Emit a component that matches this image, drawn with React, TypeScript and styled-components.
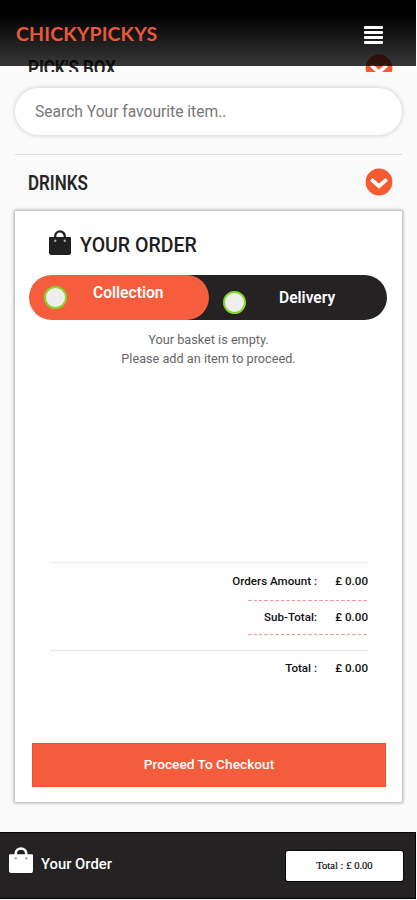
import React from 'react';
import styled, { createGlobalStyle } from 'styled-components';

const ORANGE = '#f55d3c';
const DARK = '#242223';

const GlobalStyle = createGlobalStyle`
  * { box-sizing: border-box; }
  body { margin: 0; background: #fafafa; font-family: Roboto, "Liberation Sans", sans-serif; }
`;

const Page = styled.div`
  width: 417px;
  height: 900px;
  overflow: hidden;
  display: flex;
  flex-direction: column;
  background: #fafafa;
`;

const Header = styled.header`
  position: relative;
  z-index: 1;
  flex: none;
  width: 416px;
  height: 66px;
  margin-bottom: -12px;
  padding: 2px 33px 0 16px;
  display: flex;
  align-items: center;
  justify-content: space-between;
  background: linear-gradient(#000 0%, #000 22%, rgba(0, 0, 0, 0.78) 100%);
`;

const Brand = styled.h1`
  margin: 0;
  font: 700 19.5px/24px Lato, sans-serif;
  letter-spacing: 0.14px;
  color: #e9583b;
`;

const MenuButton = styled.div`
  width: 19px;
  height: 19px;
  margin-top: 2px;
  display: flex;
  flex-direction: column;
  justify-content: space-between;
`;

const MenuBar = styled.span`
  height: 3.6px;
  border-radius: 1px;
  background: #fff;
`;

const ScrolledCategory = styled.section`
  flex: none;
  height: 18px;
  padding: 0 24px 0 28px;
  overflow: hidden;
  display: flex;
  justify-content: space-between;
  align-items: flex-start;
  background: #fdfdfd;
`;

const CategoryTitle = styled.h2<{ $width: number; $top: number }>`
  margin: ${(p) => p.$top}px 0 0;
  width: ${(p) => p.$width}px;
  font-size: 19.5px;
  line-height: 28px;
  font-weight: 600;
  white-space: nowrap;
  color: #252525;
  transform: scaleX(0.87);
  transform-origin: left;
`;

const SearchBox = styled.div`
  flex: none;
  height: 47px;
  margin: 16px 15px 0;
  padding: 0 20px;
  display: flex;
  align-items: center;
  border-radius: 24px;
  background: #fff;
  box-shadow: 0 0 5px rgba(0, 0, 0, 0.2);
  font-size: 15.6px;
  color: #777;
`;

const CategoryRow = styled.section`
  flex: none;
  height: 56px;
  margin: 19px 15px 0;
  padding: 0 9px 0 13px;
  display: flex;
  align-items: center;
  justify-content: space-between;
  border-top: 1px solid #ddd;
  & > svg { margin-top: -2px; }
`;

const Card = styled.main`
  flex: none;
  height: 591px;
  margin: 1px 15px 0;
  padding: 0 16px 16px;
  display: flex;
  flex-direction: column;
  background: #fff;
  box-shadow: 0 0 3px 1px rgba(0, 0, 0, 0.32);
`;

const OrderHeading = styled.div`
  height: 65px;
  padding: 4px 0 0 18px;
  display: flex;
  align-items: center;
  gap: 9px;
  color: #202020;
  & > svg { margin-top: -6px; }
`;

const OrderTitle = styled.h2`
  margin: 0;
  font-size: 19.5px;
  line-height: 24px;
  font-weight: 500;
`;

const Toggle = styled.div`
  flex: none;
  height: 45px;
  margin: -1px -1px 0 -2px;
  display: flex;
  border-radius: 23px;
  background: linear-gradient(90deg, transparent 40px, ${DARK} 40px);
`;

const Option = styled.div<{ $active?: boolean }>`
  width: ${(p) => (p.$active ? 180 : 178)}px;
  height: 45px;
  padding-left: ${(p) => (p.$active ? 15 : 14)}px;
  padding-top: ${(p) => (p.$active ? 0 : 10)}px;
  display: flex;
  align-items: center;
  border-radius: 23px;
  background: ${(p) => (p.$active ? ORANGE : 'transparent')};
  color: #fff;
`;

const Radio = styled.span`
  flex: none;
  width: 23px;
  height: 23px;
  border-radius: 50%;
  border: 2px solid #84d82b;
  background: #eee;
`;

const OptionLabel = styled.span<{ $gap: number }>`
  margin-left: ${(p) => p.$gap}px;
  margin-top: -10px;
  font-size: 15.6px;
  font-weight: 600;
`;

const EmptyMessage = styled.p`
  margin: 11px 0 0;
  font-size: 12.7px;
  line-height: 18.5px;
  text-align: center;
  color: #666;
`;

const Totals = styled.section`
  height: 125px;
  margin: auto 18px 56px 19px;
  display: flex;
  flex-direction: column;
  border-top: 1px solid #ececec;
`;

const TotalRow = styled.div<{ $height: number }>`
  height: ${(p) => p.$height}px;
  padding-bottom: 2px;
  display: grid;
  grid-template-columns: 1fr 33px;
  column-gap: 18px;
  align-items: center;
  text-align: right;
  font-size: 11.6px;
  font-weight: 500;
  white-space: nowrap;
  color: #111;
`;

const DashedRule = styled.div`
  align-self: flex-end;
  width: 120px;
  height: 1px;
  background: repeating-linear-gradient(90deg, #eb9c99 0 3.5px, #fff 3.5px 5.5px);
`;

const SolidRule = styled.div`
  height: 1px;
  margin-top: 15px;
  background: #e6e6e6;
`;

const CheckoutButton = styled.button`
  flex: none;
  height: 44px;
  margin: 0 0 -1px 1px;
  padding: 0;
  border: 1px solid #f15024;
  background: #f35d3d;
  font: 500 13.7px/1 Roboto, sans-serif;
  color: #fff;
`;

const BottomBar = styled.footer`
  flex: none;
  width: 416px;
  height: 67px;
  margin-top: 30px;
  padding: 0 12px 0 9px;
  display: flex;
  align-items: center;
  border: 1px solid #050505;
  border-left: 0;
  background: ${DARK};
  color: #fff;
  & > svg { margin-top: -11px; }
`;

const BarLabel = styled.span`
  margin-left: 8px;
  margin-top: -4px;
  font-size: 14.8px;
  font-weight: 500;
`;

const TotalBadge = styled.div`
  width: 117px;
  height: 30px;
  margin-left: auto;
  border-radius: 2px;
  background: #fff;
  box-shadow: 0 0 0 1px #080808;
  text-align: center;
  font: 10.6px/30px "Liberation Serif", serif;
  color: #111;
  -webkit-text-stroke: 0.2px #111;
`;

function ChevronCircle() {
  return (
    <svg width="28" height="28" viewBox="0 0 28 28">
      <circle cx="14" cy="14" r="13.4" fill="#f65a31" />
      <path d="M6.3 11.3l7.7 6.9 7.7-6.9" fill="none" stroke="#fff" strokeWidth="3.8" />
    </svg>
  );
}

function Bag({ width, height }: { width: number; height: number }) {
  return (
    <svg width={width} height={height} viewBox="0 0 22 25" preserveAspectRatio="none">
      <path d="M6.2 10V6.2a4.8 4.8 0 0 1 9.6 0V10" fill="none" stroke="currentColor" strokeWidth="2.4" />
      <path d="M0 8q0-1 1-1h20q1 0 1 1v14.500q0 2.500-2.500 2.500H2.500q-2.500 0-2.500-2.500z" fill="currentColor" />
      <circle cx="6.2" cy="10.8" r="1.2" fill="#aaa" />
      <circle cx="15.8" cy="10.8" r="1.2" fill="#aaa" />
    </svg>
  );
}

export default function App() {
  return (
    <Page>
      <GlobalStyle />
      <Header>
        <Brand>CHICKYPICKYS</Brand>
        <MenuButton>
          <MenuBar />
          <MenuBar />
          <MenuBar />
          <MenuBar />
        </MenuButton>
      </Header>
      <ScrolledCategory>
        <CategoryTitle $width={90} $top={1}>PICK'S BOX</CategoryTitle>
        <ChevronCircle />
      </ScrolledCategory>
      <SearchBox>Search Your favourite item..</SearchBox>
      <CategoryRow>
        <CategoryTitle $width={70} $top={2}>DRINKS</CategoryTitle>
        <ChevronCircle />
      </CategoryRow>
      <Card>
        <OrderHeading>
          <Bag width={22} height={25} />
          <OrderTitle>YOUR ORDER</OrderTitle>
        </OrderHeading>
        <Toggle>
          <Option $active>
            <Radio />
            <OptionLabel $gap={26}>Collection</OptionLabel>
          </Option>
          <Option>
            <Radio />
            <OptionLabel $gap={33}>Delivery</OptionLabel>
          </Option>
        </Toggle>
        <EmptyMessage>
          Your basket is empty.
          <br />
          Please add an item to proceed.
        </EmptyMessage>
        <Totals>
          <TotalRow $height={37}>
            <span>Orders Amount :</span>
            <span>£ 0.00</span>
          </TotalRow>
          <DashedRule />
          <TotalRow $height={33}>
            <span>Sub-Total:</span>
            <span>£ 0.00</span>
          </TotalRow>
          <DashedRule />
          <SolidRule />
          <TotalRow $height={36}>
            <span>Total :</span>
            <span>£ 0.00</span>
          </TotalRow>
        </Totals>
        <CheckoutButton>Proceed To Checkout</CheckoutButton>
      </Card>
      <BottomBar>
        <Bag width={24} height={26} />
        <BarLabel>Your Order</BarLabel>
        <TotalBadge>Total : £ 0.00</TotalBadge>
      </BottomBar>
    </Page>
  );
}
